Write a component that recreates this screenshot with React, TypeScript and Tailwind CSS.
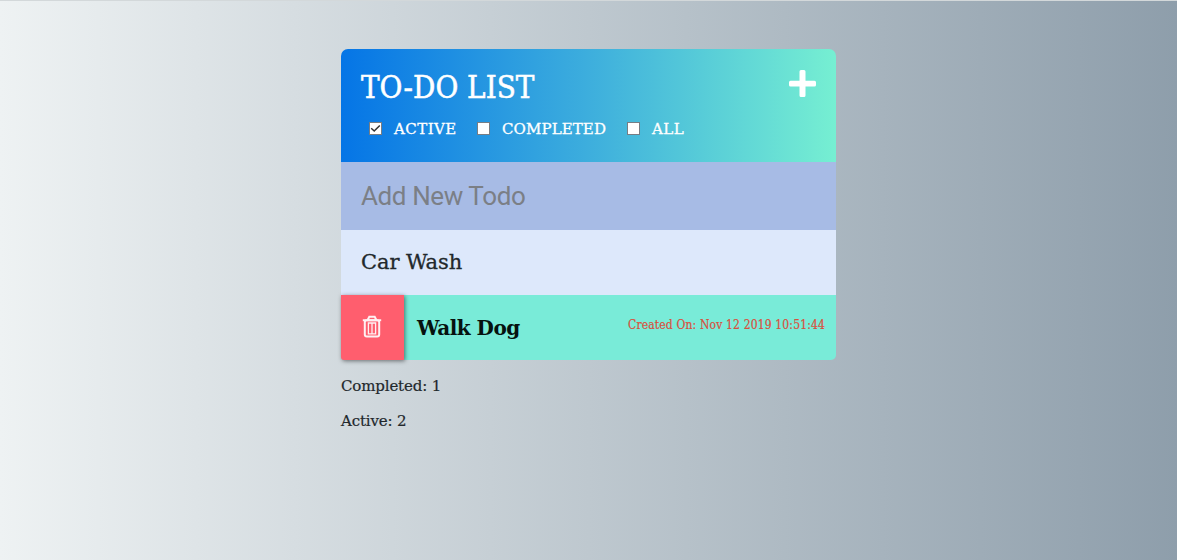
import { useState } from "react";

const slab = "font-['DejaVu_Serif',serif]";
const condensed = "font-['DejaVu_Serif_Condensed','DejaVu_Serif',serif] [font-stretch:condensed]";

function Filter({ label, checked, onClick, labelClass }: { label: string; checked: boolean; onClick: () => void; labelClass: string }) {
  return (
    <button type="button" onClick={onClick} className="flex h-5 items-center">
      <span className="mr-3 flex h-[13px] w-[13px] items-center justify-center border border-[#777d84] bg-white">
        {checked && (
          <svg viewBox="0 0 11 11" className="h-[11px] w-[11px]" fill="none" stroke="#333" strokeWidth="1.5">
            <path d="M1.2 5.3 4.2 8 9.8 2.5" />
          </svg>
        )}
      </span>
      <span className={`whitespace-nowrap pt-px text-[15px] leading-5 [-webkit-text-stroke:0.3px_white] ${labelClass}`}>{label}</span>
    </button>
  );
}

export default function App() {
  const [filter, setFilter] = useState("ACTIVE");
  return (
    <div className={`h-[560px] w-full border-t border-[#d3d8da] bg-linear-to-r/srgb from-[#eef2f3] to-[#8e9eab] pt-12 text-[#22282c] ${slab}`}>
      <main className="ml-[341px] w-[495px]">
        <section>
          <header className="h-[113px] rounded-t-[7px] bg-linear-to-r/srgb from-[#0575e6] via-[#3daedd] to-[#76efd2] pl-5 pr-5 pt-[18px] text-white">
            <div className="flex h-10 items-start justify-between">
              <h1 className={`whitespace-nowrap text-[31px] leading-[40px] [-webkit-text-stroke:0.5px_white] ${condensed}`}>TO-DO LIST</h1>
              <svg viewBox="0 0 27 27" className="mt-[3px] h-[27px] w-[27px]" fill="white">
                <path d="M12 0h3q1.5 0 1.5 1.5v9.3h9q1.5 0 1.5 1.5v2.6q0 1.5-1.5 1.5h-9v9.1q0 1.5-1.5 1.5h-3q-1.5 0-1.5-1.5v-9.1h-9q-1.5 0-1.5-1.5v-2.6q0-1.5 1.5-1.5h9V1.5q0-1.5 1.5-1.5z" />
              </svg>
            </div>
            <div className="mt-[11px] flex pl-2">
              <div className="w-[108px]"><Filter label="ACTIVE" checked={filter === "ACTIVE"} onClick={() => setFilter("ACTIVE")} labelClass="tracking-[0.45px]" /></div>
              <div className="w-[150px]"><Filter label="COMPLETED" checked={filter === "COMPLETED"} onClick={() => setFilter("COMPLETED")} labelClass="tracking-[0.1px]" /></div>
              <Filter label="ALL" checked={filter === "ALL"} onClick={() => setFilter("ALL")} labelClass="tracking-[0.5px]" />
            </div>
          </header>
          <input
            placeholder="Add New Todo"
            className="block h-[68px] w-full bg-[#a7bbe5] px-5 pb-px font-['Roboto',sans-serif] text-[26px] tracking-[-0.4px] outline-none placeholder:text-[#7b7f86]"
          />
          <div className="flex h-[65px] items-center bg-[#dde8fb] px-5 text-[21px]">
            <span className="whitespace-nowrap tracking-[-0.1px] [-webkit-text-stroke:0.3px_#22282c]">Car Wash</span>
          </div>
          <div className="flex h-[65px] items-center rounded-b-[5px] bg-[#79ebd8] pr-[11px]">
            <button type="button" aria-label="Delete" className="flex h-full w-[63px] items-center justify-center rounded-bl-[3px] bg-[#ff5e6e] pb-[2px] pr-px shadow-[1px_1px_4px_rgba(0,0,0,0.5)]">
              <svg viewBox="0 0 20 23" className="h-[23px] w-5" fill="none" stroke="#fff0f2" strokeWidth="2">
                <path d="M.8 5.2h18.400M5.500 5.200 7.300 1.800h5.400L14.500 5.200" />
                <rect x="2.8" y="5.2" width="14.4" height="16.4" rx="2" />
                <path strokeWidth="1.3" d="M6.4 8v10.800h7.200V8zM10 8v10.800" />
              </svg>
            </button>
            <span className="ml-[13px] whitespace-nowrap text-[20px] font-bold tracking-[-0.5px] text-[#06120f]">Walk Dog</span>
            <span className={`mb-[6px] ml-auto whitespace-nowrap text-[12px] tracking-[0.15px] text-[#d94f3d] [-webkit-text-stroke:0.2px_#d94f3d] ${condensed}`}>Created On: Nov 12 2019 10:51:44</span>
          </div>
        </section>
        <p className="mt-[14px] text-[15px] leading-6 tracking-[-0.15px] [-webkit-text-stroke:0.2px_#22282c]">Completed: 1</p>
        <p className="mt-[11px] text-[15px] leading-6 tracking-[-0.15px] [-webkit-text-stroke:0.2px_#22282c]">Active: 2</p>
      </main>
    </div>
  );
}
